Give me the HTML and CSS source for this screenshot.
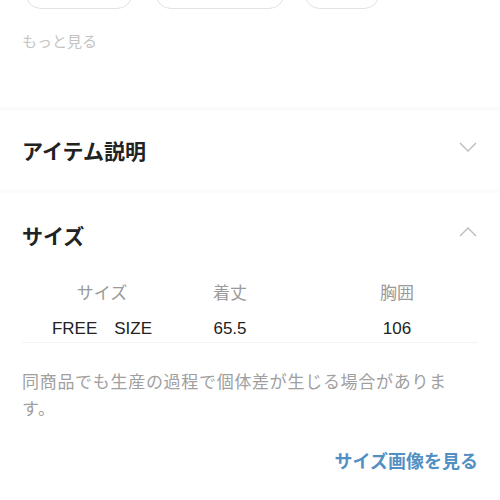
FILE: index.html
```html
<!DOCTYPE html>
<html lang="ja">
<head>
  <meta charset="UTF-8" />
  <meta name="viewport" content="width=device-width, initial-scale=1.0"/>
  <title>サイズ</title>
  <link rel="stylesheet" href="styles.css">
</head>
<body>
  <div class="tags">
    <span class="tag w1"></span>
    <span class="tag w2"></span>
    <span class="tag w3"></span>
  </div>
  <div class="more">もっと見る</div>

  <div class="section">
    <div class="acc-head">
      <h3>アイテム説明</h3>
      <svg class="chev" width="18" height="10" viewBox="0 0 18 10"><path d="M1 1 L9 9 L17 1" fill="none" stroke="#bdbdbd" stroke-width="1.4"/></svg>
    </div>
  </div>

  <div class="section">
    <div class="acc-head open">
      <h3>サイズ</h3>
      <svg class="chev" width="18" height="10" viewBox="0 0 18 10"><path d="M1 9 L9 1 L17 9" fill="none" stroke="#bdbdbd" stroke-width="1.4"/></svg>
    </div>

    <table class="size-table">
      <thead>
        <tr><th>サイズ</th><th>着丈</th><th>胸囲</th></tr>
      </thead>
      <tbody>
        <tr><td>FREE　SIZE</td><td>65.5</td><td>106</td></tr>
      </tbody>
    </table>

    <p class="note">同商品でも生産の過程で個体差が生じる場合がありま す。</p>
    <div class="link-row"><a class="size-link" href="#">サイズ画像を見る</a></div>
  </div>
</body>
</html>
```

FILE: styles.css
```css
body { margin: 0; background: #fff; font-family: "Liberation Sans", "Noto Sans CJK JP", sans-serif; color: #222; overflow: hidden; }
.tags { display: flex; gap: 22px; padding-left: 25px; margin-top: -25px; }
.tag { display: block; height: 32px; border: 1px solid #e3e3e3; border-radius: 16px; }
.tag.w1 { width: 106px; }
.tag.w2 { width: 128px; }
.tag.w3 { width: 74px; margin-left: -3px; }
.more { padding: 0 22px; margin-top: 23px; font-size: 15px; line-height: 20px; color: #c4c4c4; height: 75px; }
.section { border-top: 4px solid #fbfbfb; }
.acc-head { display: flex; justify-content: space-between; align-items: center; padding: 0 22px; height: 78px; }
.acc-head.open { height: 84px; }
.acc-head h3 { margin: 0; font-size: 21px; font-weight: bold; color: #222; }
.chev { margin-right: 1px; margin-top: -6px; }
.size-table { margin: 7px 22px 0; width: 456px; border-collapse: collapse; table-layout: fixed; }
.size-table th, .size-table td { text-align: center; padding: 0; font-size: 17px; white-space: nowrap; }
.size-table th:nth-child(1) { width: 160px; }
.size-table th:nth-child(2) { width: 96px; }
.size-table th:nth-child(3), .size-table td:nth-child(3) { padding-left: 38px; }
.size-table th { font-weight: normal; color: #9a9a9a; height: 30px; line-height: 20px; vertical-align: top; }
.size-table td { color: #222; height: 23px; line-height: 20px; padding-top: 5px; vertical-align: top; border-bottom: 1px solid #f3f3f3; }
.note { margin: 26px 0 0; padding: 0 22px; max-width: 436px; font-size: 17px; line-height: 27px; letter-spacing: 0.7px; color: #a0a0a0; }
.link-row { display: flex; justify-content: flex-end; padding: 0 22px; margin-top: 29px; }
.size-link { color: #5290c4; font-size: 18px; line-height: 20px; font-weight: bold; text-decoration: none; }
```
